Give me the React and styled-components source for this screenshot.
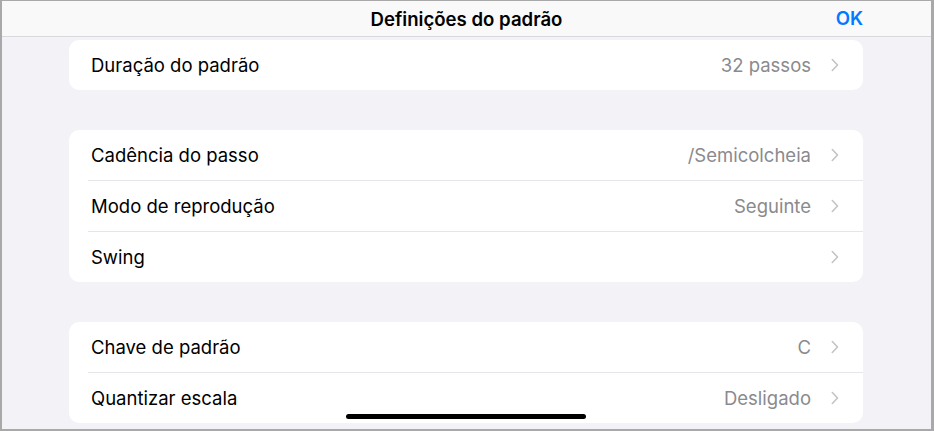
import styled, { createGlobalStyle } from 'styled-components';

const GlobalStyle = createGlobalStyle`
    html, body {
        margin: 0;
        padding: 0;
        background: #a9a9a9;
    }

    * {
        box-sizing: border-box;
    }
`;

const Frame = styled.div`
    width: 934px;
    height: 431px;
    border-style: solid;
    border-color: #a9a9a9;
    border-width: 1px 3px 2px 2px;
    background-color: #f2f2f7;
    font-family: 'Inter', 'Roboto', 'Liberation Sans', sans-serif;
    position: relative;
    overflow: hidden;
    display: flex;
    flex-direction: column;
`;

const Header = styled.div`
    height: 36px;
    flex-shrink: 0;
    display: flex;
    align-items: center;
    justify-content: center;
    position: relative;
    background-color: #f9f9f9;
    border-bottom: 1px solid #d9d9dd;
`;

const Title = styled.p`
    margin: 0;
    color: #000000;
    font-size: 18.6px;
    font-weight: 600;
`;

const Done = styled.button`
    position: absolute;
    right: 68px;
    top: 6px;
    border: none;
    background: none;
    padding: 0;
    color: #007aff;
    font-family: inherit;
    font-size: 18.6px;
    font-weight: 600;
`;

const Content = styled.div`
    display: flex;
    flex-direction: column;
    gap: 40px;
    padding: 3px 68px 0 67px;
`;

const Group = styled.div`
    border-radius: 10px;
    background-color: #ffffff;
    overflow: hidden;
`;

const Row = styled.div`
    height: 50px;
    display: flex;
    align-items: center;
    padding-left: 22px;
    padding-right: 24px;

    & + & {
        height: 51px;
        border-top: 1px solid #e6e6ea;
        margin-left: 19px;
        padding-left: 3px;
    }
`;

const Label = styled.span`
    flex: 1;
    color: #000000;
    font-size: 18.5px;
`;

const Value = styled.span`
    color: #8a8a8e;
    font-size: 18.5px;
    margin-right: 20px;
`;

const Chevron = () => (
    <svg width="8" height="14" viewBox="0 0 8 14" fill="none">
        <path d="M1.3 1.5L6.5 7L1.3 12.5" stroke="#c4c4c7" strokeWidth="1.6" strokeLinecap="round" strokeLinejoin="round" />
    </svg>
);

const HomeBar = styled.div`
    position: absolute;
    left: 344px;
    bottom: 10px;
    width: 240px;
    height: 5px;
    border-radius: 3px;
    background-color: #000000;
`;

const groups = [
    [{ label: 'Duração do padrão', value: '32 passos' }],
    [
        { label: 'Cadência do passo', value: '/Semicolcheia' },
        { label: 'Modo de reprodução', value: 'Seguinte' },
        { label: 'Swing', value: '' }
    ],
    [
        { label: 'Chave de padrão', value: 'C' },
        { label: 'Quantizar escala', value: 'Desligado' }
    ]
];

function App() {
    return (
        <Frame>
            <GlobalStyle />
            <Header>
                <Title>Definições do padrão</Title>
                <Done type="button">OK</Done>
            </Header>
            <Content>
                {groups.map((rows, i) => (
                    <Group key={i}>
                        {rows.map((row) => (
                            <Row key={row.label}>
                                <Label>{row.label}</Label>
                                <Value>{row.value}</Value>
                                <Chevron />
                            </Row>
                        ))}
                    </Group>
                ))}
            </Content>
            <HomeBar />
        </Frame>
    );
}

export default App;
